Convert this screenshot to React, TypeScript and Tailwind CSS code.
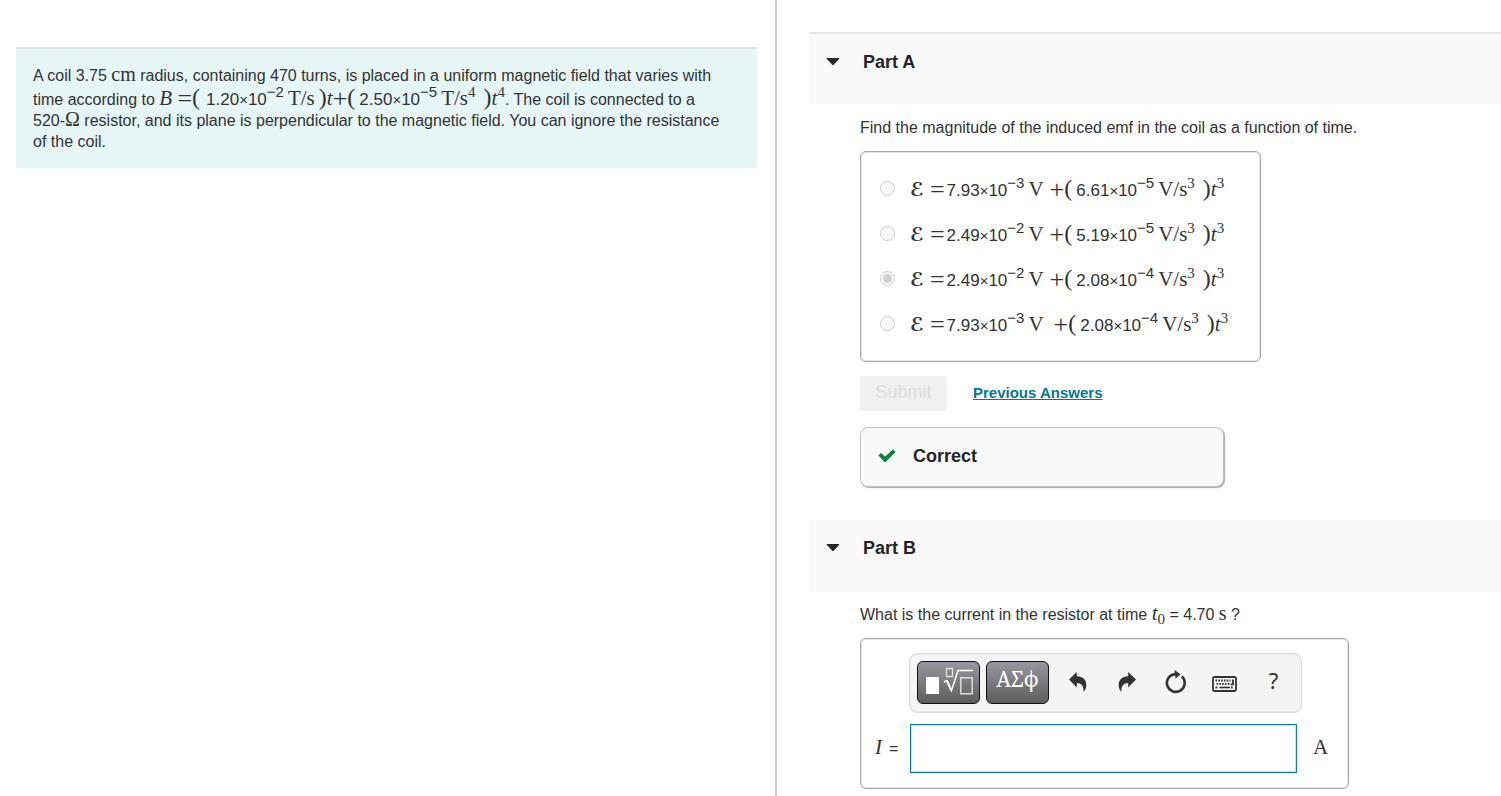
import React, { useState } from 'react';

// ---- math bits ----

const Sup: React.FC<{ children: React.ReactNode }> = ({ children }) => (
  <span className="relative -top-2 text-[15px] leading-none">{children}</span>
);

// wide operators: = and +
const Op: React.FC<{ children: React.ReactNode }> = ({ children }) => (
  <span className="text-[26px] leading-[18px] align-[-2px]">{children}</span>
);

const Paren: React.FC<{ children: React.ReactNode }> = ({ children }) => (
  <span className="text-[24px] leading-[18px]">{children}</span>
);

const MathText: React.FC<{ children: React.ReactNode }> = ({ children }) => (
  <span className="whitespace-nowrap font-['Liberation_Serif',serif] text-[21px] leading-[18px]">{children}</span>
);

const Sci: React.FC<{ value: string; exp: string }> = ({ value, exp }) => (
  <span className="font-['Liberation_Sans',sans-serif] text-[17px] leading-none">
    {value}<span className="text-[15px]">×</span>10<Sup>−{exp}</Sup>
  </span>
);

interface Choice {
  a: string;
  aExp: string;
  b: string;
  bExp: string;
  wide?: boolean;
}

const choices: Choice[] = [
  { a: '7.93', aExp: '3', b: '6.61', bExp: '5' },
  { a: '2.49', aExp: '2', b: '5.19', bExp: '5' },
  { a: '2.49', aExp: '2', b: '2.08', bExp: '4' },
  { a: '7.93', aExp: '3', b: '2.08', bExp: '4', wide: true },
];

const ChoiceFormula: React.FC<{ choice: Choice }> = ({ choice }) => (
  <MathText>
    <span className="mr-1.5 font-['DejaVu_Sans',sans-serif] text-[19px] font-bold">ℰ</span>
    <Op>=</Op>
    <span className="ml-0.5"><Sci value={choice.a} exp={choice.aExp} /></span>
    <span className="ml-1">V</span>
    <span className={choice.wide ? 'ml-2.5' : 'ml-1.5'}><Op>+</Op></span>
    <Paren>(</Paren>
    <span className="ml-1"><Sci value={choice.b} exp={choice.bExp} /></span>
    <span className="ml-1">V/s<Sup>3</Sup></span>
    <span className="ml-2"><Paren>)</Paren></span>
    <i>t</i><Sup>3</Sup>
  </MathText>
);

// ---- layout ----

const PartHeader: React.FC<{ title: string; open: boolean; onToggle: () => void; first?: boolean }> = ({ title, open, onToggle, first }) => (
  <h2 className={first ? 'h-[73px] border-t-2 border-[#e6e6e6] bg-[#f9f9f9]' : 'h-[72px] bg-[#f9f9f9]'}>
    <button
      type="button"
      aria-expanded={open}
      onClick={onToggle}
      className="flex items-center gap-[23px] pt-4 pl-[17px] text-[18px] leading-6 font-bold text-[#252525]"
    >
      <svg width="14" height="8" viewBox="0 0 14 8" className={open ? '' : '-rotate-90'} aria-hidden="true">
        <path d="M1.300 0h11.400q1.100 0 .4 1L7.700 6.800q-.7.800-1.400 0L.9 1Q.2 0 1.300 0z" fill="#252525" />
      </svg>
      {title}
    </button>
  </h2>
);

const toolButton = 'flex h-[42px] w-[49px] items-center justify-center text-[#333]';
const darkButton = 'flex h-[43px] w-[63px] items-center justify-center rounded-md border border-[#111] bg-linear-to-b from-[#9797a0] to-[#5e5e5e] text-white';

const Toolbar: React.FC<{ onClear: () => void }> = ({ onClear }) => (
  <div className="flex h-[60px] items-center rounded-lg border border-[#dcdcdc] bg-[#f4f4f4] pb-0.5 pl-[7px] shadow-[inset_0_0_0_1px_#e9e9e9]">
    <button type="button" aria-label="Templates" className={darkButton}>
      <svg width="48" height="30" viewBox="0 0 48 30" fill="none" aria-hidden="true">
        <path d="M1 10h13v17H1z" fill="#fff" />
        <path d="M21.500 1.500h6v8h-6z" stroke="#e4e4e4" strokeWidth="1.300" />
        <path d="M19 15l3-1.500 4.500 10L33 3.500h15" stroke="#fff" strokeWidth="1.500" />
        <path d="M22.300 14.500l4 9" stroke="#fff" strokeWidth="2" />
        <path d="M35.800 10.800h11.400v15.900H35.800z" stroke="#ddd" strokeWidth="1.500" />
      </svg>
    </button>
    <button type="button" aria-label="Symbols" className={`${darkButton} ml-[6px] pb-1 font-['Noto_Serif','DejaVu_Serif','Liberation_Serif',serif] text-[21px]`}>
      ΑΣϕ
    </button>
    <div className="ml-1 flex">
      <button type="button" aria-label="Undo" className={toolButton}>
        <svg width="18" height="20" viewBox="0 0 18 20" fill="#333" aria-hidden="true">
          <path d="M0 7.500L7.800 0v4.300C14 4.500 17.300 8 17.300 13c0 3-1 5.300-2.800 7 .5-5.500-1.500-9-6.700-9v4.400z" />
        </svg>
      </button>
      <button type="button" aria-label="Redo" className={toolButton}>
        <svg width="18" height="20" viewBox="0 0 18 20" fill="#333" aria-hidden="true">
          <path d="M18 7.500L10.200 0v4.300C4 4.500.7 8 .7 13c0 3 1 5.300 2.800 7C3 14.500 5 11 10.200 11v4.400z" />
        </svg>
      </button>
      <button type="button" aria-label="Reset" onClick={onClear} className={toolButton}>
        <svg width="22" height="24" viewBox="0 0 22 24" aria-hidden="true">
          <path d="M16.800 6.400A8.900 8.900 0 1 1 10 4.100" fill="none" stroke="#333" strokeWidth="2.600" />
          <path d="M9.500 0l6 4.300-5 4.500z" fill="#333" />
        </svg>
      </button>
      <button type="button" aria-label="Keyboard shortcuts" className={`${toolButton} pt-1`}>
        <svg width="25" height="16" viewBox="0 0 25 16" fill="none" stroke="#333" aria-hidden="true">
          <rect x="1" y="1" width="23" height="14" rx="1.500" strokeWidth="1.800" />
          <path d="M3.500 4.500h15M4.500 7.800h14M3.500 11.500h3M19 11.500h2.500" strokeWidth="1.800" strokeDasharray="1.700 1.100" />
          <path d="M7.500 11.500h10.500" strokeWidth="1.600" />
          <path d="M21 3.500v4.800h-2.500" strokeWidth="1.800" />
        </svg>
      </button>
      <button type="button" aria-label="Help" className={`${toolButton} pb-1 font-['Noto_Sans',sans-serif] text-[22px]`}>
        ?
      </button>
    </div>
  </div>
);

const Problem: React.FC = () => (
  <section className="mt-[47px] mr-[18px] ml-4 border-t-2 border-[#dde5e5] bg-[#e6f6f6] px-[17px] pt-4 pb-4">
    <p className="leading-[21px]">
      A coil 3.75 <MathText><span className="text-[20px]">cm</span></MathText> radius, containing 470 turns, is placed in a uniform magnetic field that varies with
      time according to{' '}
      <MathText>
        <i className="leading-6">B</i> <Op>=</Op><Paren>(</Paren>
        <span className="ml-1.5"><Sci value="1.20" exp="2" /></span>
        <span className="ml-1">T/s</span>
        <span className="ml-1"><Paren>)</Paren></span>
        <i>t</i><Op>+</Op><Paren>(</Paren>
        <span className="ml-1"><Sci value="2.50" exp="5" /></span>
        <span className="ml-1">T/s<Sup>4</Sup></span>
        <span className="ml-2"><Paren>)</Paren></span>
        <i>t</i><Sup>4</Sup>
      </MathText>
      . The coil is connected to a
      <br />
      520-<MathText><span className="text-[20px]">Ω</span></MathText> resistor, and its plane is perpendicular to the magnetic field. You can ignore the resistance
      <br />
      of the coil.
    </p>
  </section>
);

const App: React.FC = () => {
  const [picked, setPicked] = useState(2);
  const [current, setCurrent] = useState('');
  const [openA, setOpenA] = useState(true);
  const [openB, setOpenB] = useState(true);

  return (
    <main className="grid min-h-screen grid-cols-[777fr_724fr] bg-white font-['Liberation_Sans',Arial,sans-serif] text-[16px] text-[#333]">
      <div className="border-r-2 border-[#c9cfdf]">
        <Problem />
      </div>

      <div className="pt-8 pl-8">
        <PartHeader title="Part A" first open={openA} onToggle={() => setOpenA(!openA)} />
        {openA && (
          <section className="pr-4 pb-[33px] pl-[51px]">
            <p className="pt-3 leading-[21px]">Find the magnitude of the induced emf in the coil as a function of time.</p>
            <fieldset className="mt-[13px] flex max-w-[401px] flex-col rounded-md border border-[#a8a8a8] pt-[14px] pb-[15px] pl-[19px] shadow-[inset_0_0_0_1px_#e4e4e4]">
              {choices.map((choice, i) => (
                <label key={i} className="flex h-[45px] items-center gap-[15px]">
                  <input type="radio" name="emf" disabled checked={picked === i} onChange={() => setPicked(i)} className="size-[15px]" />
                  <ChoiceFormula choice={choice} />
                </label>
              ))}
            </fieldset>
            <div className="mt-[14px] flex items-center gap-[26px]">
              <button type="button" disabled className="h-[35px] w-[87px] rounded-xs bg-[#f0f0f0] pb-[3px] text-[18px] text-[#dcdcdc]">Submit</button>
              <a href="#answers" className="text-[15px] font-bold text-[#007a9c] underline">Previous Answers</a>
            </div>
            <div className="mt-4 flex h-[60px] max-w-[364px] items-center gap-[17px] rounded-lg border border-[#bfbfbf] bg-[#f9f9f9] pb-0.5 pl-[17px] text-[18px] font-bold text-[#252525] shadow-[1px_1px_1px_#aaa]">
              <svg width="18" height="14" viewBox="0 0 18 14" aria-hidden="true">
                <path d="M.4 6.600L3 4l4 3.600L15 .4 17.600 3 7 13.400z" fill="#008638" />
              </svg>
              Correct
            </div>
          </section>
        )}

        <PartHeader title="Part B" open={openB} onToggle={() => setOpenB(!openB)} />
        {openB && (
          <section className="pr-4 pl-[51px]">
            <p className="pt-3 leading-[21px]">
              What is the current in the resistor at time <MathText><i>t</i><sub className="text-[15px]">0</sub></MathText> = 4.70 <MathText><span className="text-[20px]">s</span></MathText> ?
            </p>
            <div className="mt-[13px] max-w-[489px] rounded-md border border-[#a8a8a8] px-[14px] pt-[14px] pb-[15px] shadow-[inset_0_0_0_1px_#e4e4e4]">
              <div className="mr-8 ml-[34px]">
                <Toolbar onClear={() => setCurrent('')} />
              </div>
              <div className="mt-[11px] flex items-center">
                <label htmlFor="current" className="flex w-[35px] shrink-0 items-baseline gap-[7px]">
                  <MathText><i>I</i></MathText>=
                </label>
                <input
                  id="current"
                  type="text"
                  value={current}
                  onChange={(e) => setCurrent(e.target.value)}
                  className="h-[49px] min-w-0 flex-1 border border-[#007fa3] bg-white px-2 shadow-[inset_0_0_0_1px_#c4e2ea] outline-none"
                />
                <span className="w-[37px] pl-4"><MathText>A</MathText></span>
              </div>
            </div>
          </section>
        )}
      </div>
    </main>
  );
};

export default App;
